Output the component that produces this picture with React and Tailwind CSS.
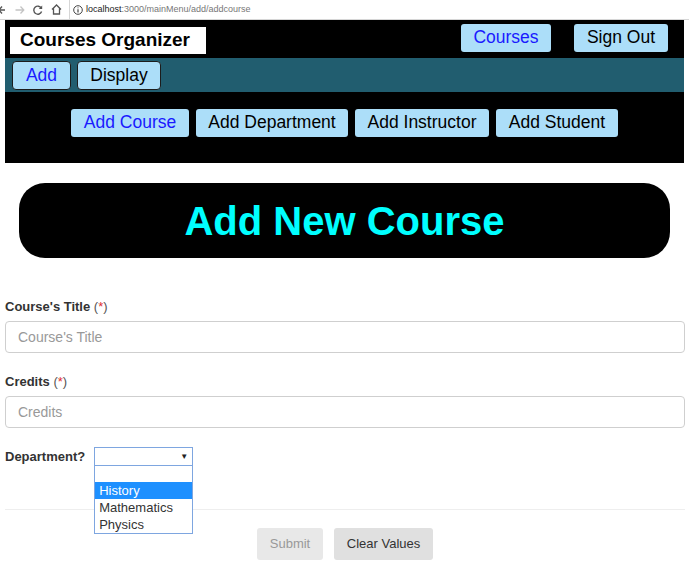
import React from "react";

const navBtn = "h-[28px] rounded-[3px] bg-[#acdef9] leading-none flex items-center justify-center whitespace-nowrap";

const App = () => {
    const options = ["History", "Mathematics", "Physics"];

    return (
        <div className="w-[689px] h-[566px] bg-white overflow-hidden font-['Liberation_Sans',Arial,sans-serif] relative">
            {/* browser bar */}
            <div className="h-[20px] flex items-center border-b border-[#d6d6d6] bg-white text-[#555]">
                <svg width="8" height="10" viewBox="0 0 8 10" className="-ml-[2px]">
                    <path d="M7 5H1M4 1.5L0.8 5 4 8.5" fill="none" stroke="#555" strokeWidth="1.4" />
                </svg>
                <svg width="10" height="10" viewBox="0 0 10 10" className="ml-[9px]">
                    <path d="M0.5 5H8.5M5.5 1.5L8.8 5 5.5 8.5" fill="none" stroke="#c4c4c4" strokeWidth="1.3" />
                </svg>
                <svg width="10" height="10" viewBox="0 0 10 10" className="ml-[8px]">
                    <path d="M8.3 3.2A4 4 0 1 0 8.6 6.5" fill="none" stroke="#555" strokeWidth="1.4" />
                    <path d="M9.2 0.6V4H5.8Z" fill="#555" />
                </svg>
                <svg width="11" height="11" viewBox="0 0 11 11" className="ml-[8px]">
                    <path d="M1 5.5L5.5 1 10 5.5M2.5 4.2V10H8.5V4.2" fill="none" stroke="#555" strokeWidth="1.3" />
                </svg>
                <div className="ml-[7px] h-[20px] w-px bg-[#d6d6d6]" />
                <svg width="10" height="10" viewBox="0 0 10 10" className="ml-[3px]">
                    <circle cx="5" cy="5" r="4.3" fill="none" stroke="#444" strokeWidth="1" />
                    <path d="M5 4.2V7.6M5 2.4V3.3" stroke="#444" strokeWidth="1.2" />
                </svg>
                <span className="ml-[3px] text-[9px] leading-none text-[#777]">
                    <span className="text-[#222]">localhost</span>:3000/mainMenu/add/addcourse
                </span>
            </div>

            <div className="pl-[5px]">
                {/* header */}
                <div className="w-[679px] h-[38px] bg-black flex items-start justify-between">
                    <div className="mt-[7px] ml-[5px] h-[27px] w-[196px] bg-white pl-[10px] flex items-center text-[19px] font-bold text-black whitespace-nowrap">
                        Courses Organizer
                    </div>
                    <div className="flex gap-[23px] mt-[4px] mr-[16px]">
                        <div className={`${navBtn} h-[27px] w-[90px] text-[17.5px] text-[#1a1aff]`}>Courses</div>
                        <div className={`${navBtn} h-[27px] w-[94px] text-[17.5px] text-black`}>Sign Out</div>
                    </div>
                </div>

                <div className="w-[679px] h-[34px] bg-[#215d6f] flex items-start gap-[6px] pl-[7px] pt-[3px]">
                    <div className="h-[29px] w-[59px] rounded-[4px] border border-[#1c1c1c] bg-[#acdef9] flex items-center justify-center text-[17.5px] text-[#1a1aff]">Add</div>
                    <div className="h-[29px] w-[84px] rounded-[4px] border border-[#1c1c1c] bg-[#acdef9] flex items-center justify-center text-[17.5px] text-black">Display</div>
                </div>

                <div className="w-[679px] h-[71px] bg-black flex justify-center gap-[7px] pt-[17px] text-[17.5px]">
                    <div className={`${navBtn} w-[118px] text-[#1a1aff]`}>Add Course</div>
                    <div className={`${navBtn} w-[152px] text-black`}>Add Department</div>
                    <div className={`${navBtn} w-[134px] text-black`}>Add Instructor</div>
                    <div className={`${navBtn} w-[122px] text-black`}>Add Student</div>
                </div>

                {/* title */}
                <div className="mt-[20px] ml-[14px] w-[651px] h-[75px] bg-black rounded-[26px] flex items-center justify-center">
                    <h1 className="text-[40px] font-bold text-[#00ffff] leading-none">Add New Course</h1>
                </div>

                {/* form */}
                <div className="w-[680px] text-[13px] text-[#333]">
                    <label className="block mt-[41px] h-[15px] leading-[15px] font-bold">
                        Course's Title <span className="font-normal text-[#555]">(<span className="text-[#e03030]">*</span>)</span>
                    </label>
                    <div className="mt-[7px] h-[32px] rounded-[4px] border border-[#cfcfcf] flex items-center pl-[12px] text-[14px] text-[#999]">
                        Course's Title
                    </div>

                    <label className="block mt-[21px] h-[15px] leading-[15px] font-bold">
                        Credits <span className="font-normal text-[#555]">(<span className="text-[#e03030]">*</span>)</span>
                    </label>
                    <div className="mt-[7px] h-[32px] rounded-[4px] border border-[#cfcfcf] flex items-center pl-[12px] text-[14px] text-[#999]">
                        Credits
                    </div>

                    <div className="mt-[19px] flex items-center h-[19px]">
                        <span className="font-bold">Department?</span>
                        <div className="relative ml-[9px]">
                            <div className="w-[99px] h-[19px] border border-[#7ea6e0] bg-white flex items-center justify-end pr-[4px]">
                                <span className="text-[8px] text-[#222]">▼</span>
                            </div>
                            <div className="absolute left-0 top-[18px] w-[99px] border border-[#7ea6e0] bg-white z-10 text-[13px] text-[#333]">
                                <div className="h-[16px]" />
                                {options.map((o, i) => (
                                    <div key={o} className={`h-[17px] leading-[17px] pl-[4px] ${i === 0 ? "bg-[#1e90ff] text-white" : ""}`}>{o}</div>
                                ))}
                            </div>
                        </div>
                    </div>

                    <div className="mt-[43px] h-px bg-[#eeeeee]" />

                    <div className="mt-[18px] flex justify-center gap-[11px]">
                        <div className="h-[32px] w-[66px] rounded-[3px] bg-[#e8e8e8] text-[#999] flex items-center justify-center">Submit</div>
                        <div className="h-[32px] w-[99px] rounded-[3px] bg-[#e0e0e0] text-[#333] flex items-center justify-center">Clear Values</div>
                    </div>
                </div>
            </div>
        </div>
    );
};

export default App;
